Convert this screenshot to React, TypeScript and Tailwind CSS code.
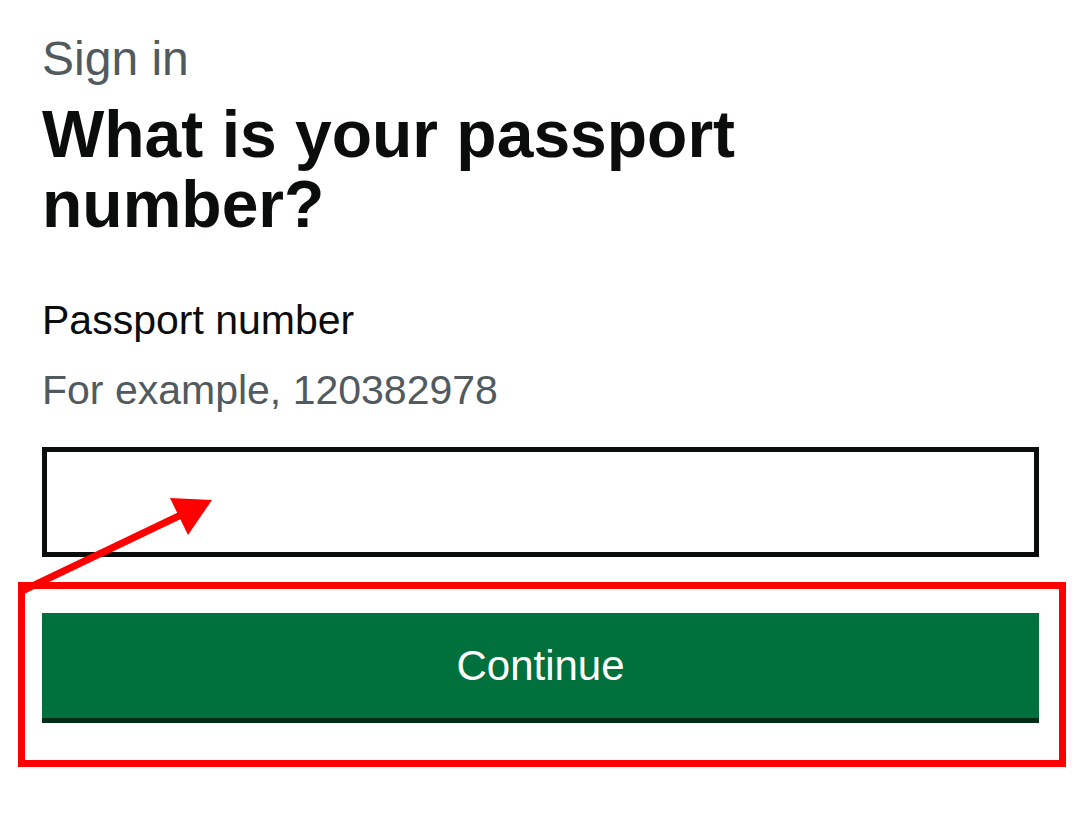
import React from "react";

export default function App() {
  return (
    <div
      className="relative w-[1080px] h-[819px] bg-white overflow-hidden"
      style={{ fontFamily: '"Liberation Sans", Arial, sans-serif' }}
    >
      <div className="flex flex-col pl-[42px] pr-[41px] pt-[35px]">
        <span className="text-[48px] leading-[48px] text-[#505a5f]">Sign in</span>
        <h1 className="mt-[16px] text-[66px] leading-[70px] font-bold text-[#0b0c0c] w-[760px]">
          What is your passport number?
        </h1>
        <label className="mt-[61px] text-[41px] leading-[41px] text-[#0b0c0c]">
          Passport number
        </label>
        <div className="mt-[29px] text-[41px] leading-[41px] text-[#505a5f]">
          For example, 120382978
        </div>
        <input
          type="text"
          className="mt-[36px] h-[110px] w-full border-[5px] border-[#0b0c0c] bg-white outline-none"
        />
        <button className="mt-[56px] h-[105px] w-full bg-[#00703c] text-white text-[42px] shadow-[0_5px_0_#002d18] flex items-center justify-center">
          Continue
        </button>
      </div>

      <svg
        className="absolute inset-0 pointer-events-none"
        width="1080"
        height="819"
        viewBox="0 0 1080 819"
      >
        <rect
          x="21.5"
          y="585.5"
          width="1041"
          height="178"
          fill="none"
          stroke="#ff0000"
          strokeWidth="7"
        />
        <line
          x1="22"
          y1="591"
          x2="183"
          y2="514"
          stroke="#ff0000"
          strokeWidth="7"
        />
        <polygon points="212,500 170,498 188,535" fill="#ff0000" />
      </svg>
    </div>
  );
}
